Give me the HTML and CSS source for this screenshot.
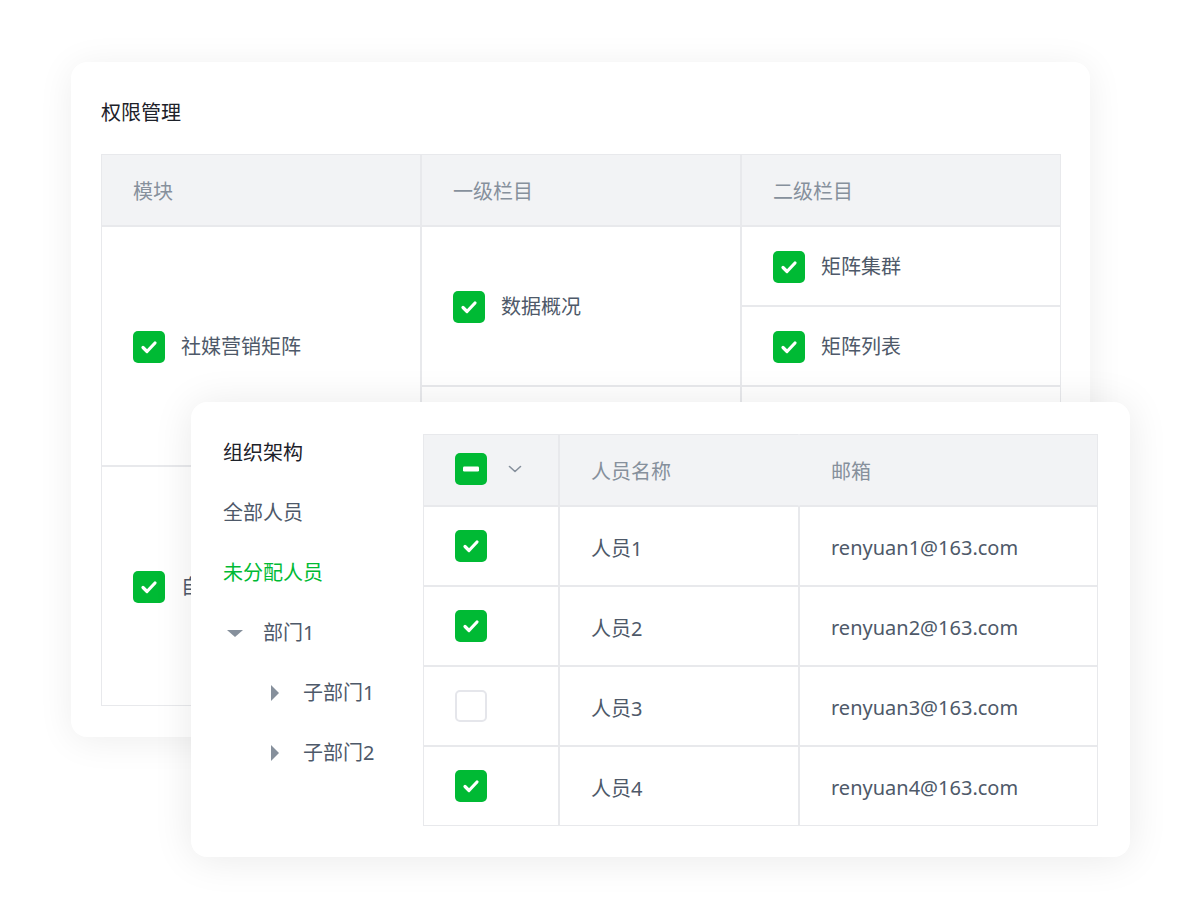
FILE: index.html
```html
<!DOCTYPE html>
<html lang="zh-CN">
<head>
  <meta charset="UTF-8">
  <title>权限管理</title>
  <link rel="stylesheet" href="styles.css">
</head>
<body>
  <div class="stage">
    <div class="card perm">
      <h2 class="title">权限管理</h2>
      <table class="grid">
        <thead>
          <tr><th>模块</th><th>一级栏目</th><th>二级栏目</th></tr>
        </thead>
        <tbody>
          <tr>
            <td rowspan="3"><span class="cb on"></span>社媒营销矩阵</td>
            <td rowspan="2"><span class="cb on"></span>数据概况</td>
            <td><span class="cb on"></span>矩阵集群</td>
          </tr>
          <tr><td><span class="cb on"></span>矩阵列表</td></tr>
          <tr><td><span class="cb on"></span>内容管理</td><td><span class="cb on"></span>内容列表</td></tr>
          <tr>
            <td rowspan="3"><span class="cb on"></span>自媒体运营</td>
            <td rowspan="3"><span class="cb on"></span>账号管理</td>
            <td><span class="cb on"></span>账号列表</td>
          </tr>
          <tr><td><span class="cb on"></span>账号分组</td></tr>
          <tr><td><span class="cb on"></span>账号授权</td></tr>
        </tbody>
      </table>
    </div>

    <div class="card people">
      <ul class="tree">
        <li class="strong">组织架构</li>
        <li>全部人员</li>
        <li class="active">未分配人员</li>
        <li class="dept"><span class="arrow down"></span>部门1</li>
        <li class="sub"><span class="arrow right"></span>子部门1</li>
        <li class="sub"><span class="arrow right"></span>子部门2</li>
      </ul>
      <table class="grid members">
        <thead>
          <tr>
            <th class="sel"><span class="cb part"></span><svg class="chev" width="14" height="8" viewBox="0 0 14 8"><path d="M1.5 1.5 7 6.5 12.5 1.5" fill="none" stroke="#86909c" stroke-width="1.6" stroke-linecap="round" stroke-linejoin="round"/></svg></th>
            <th class="name">人员名称</th>
            <th class="mail">邮箱</th>
          </tr>
        </thead>
        <tbody>
          <tr><td class="sel"><span class="cb on"></span></td><td>人员1</td><td>renyuan1@163.com</td></tr>
          <tr><td class="sel"><span class="cb on"></span></td><td>人员2</td><td>renyuan2@163.com</td></tr>
          <tr><td class="sel"><span class="cb"></span></td><td>人员3</td><td>renyuan3@163.com</td></tr>
          <tr><td class="sel"><span class="cb on"></span></td><td>人员4</td><td>renyuan4@163.com</td></tr>
        </tbody>
      </table>
    </div>
  </div>
</body>
</html>
```

FILE: styles.css
```css
body {
  margin: 0;
  background: #fff;
  font-family: "Noto Sans", "Noto Sans CJK SC", sans-serif;
  color: #4e5969;
  font-size: 20px;
}
.stage {
  position: relative;
  width: 1200px;
  height: 920px;
  overflow: hidden;
}
.card {
  background: #fff;
  border-radius: 16px;
  box-sizing: border-box;
}
.perm {
  margin: 62px 0 0 71px;
  width: 1019px;
  height: 675px;
  padding: 37px 30px 30px;
  box-shadow: 0 4px 36px rgba(0, 0, 0, 0.07);
}
.title {
  margin: 0 0 27px;
  font-size: 20px;
  line-height: 28px;
  font-weight: 400;
  color: #1d2129;
}
.grid {
  border-collapse: separate;
  border-spacing: 0;
  table-layout: fixed;
}
.perm .grid { width: 960px; }
.grid th, .grid td {
  border: 1px solid #e8e9ec;
  padding: 0 0 0 31px;
  text-align: left;
  white-space: nowrap;
  overflow: hidden;
}
.grid th {
  height: 70px;
  background: #f2f3f5;
  font-weight: 400;
  color: #86909c;
}
.grid td {
  height: 76px;
  padding-top: 2px;
}
.cb {
  display: inline-block;
  width: 32px;
  height: 32px;
  box-sizing: border-box;
  border: 2px solid #e5e6eb;
  border-radius: 5px;
  background: #fff center / 32px 32px no-repeat;
  vertical-align: middle;
  margin: -5px 16px 0 0;
}
.cb.on {
  border: 0;
  background-color: #00ba34;
  background-image: url("data:image/svg+xml,%3Csvg xmlns='http://www.w3.org/2000/svg' viewBox='0 0 32 32'%3E%3Cpath d='M10 16.5l4 4 8-8.5' fill='none' stroke='%23fff' stroke-width='3.2' stroke-linecap='round' stroke-linejoin='round'/%3E%3C/svg%3E");
}
.cb.part {
  border: 0;
  background-color: #00ba34;
  background-image: url("data:image/svg+xml,%3Csvg xmlns='http://www.w3.org/2000/svg' viewBox='0 0 32 32'%3E%3Crect x='8' y='13.5' width='16' height='5' rx='1.2' fill='%23fff'/%3E%3C/svg%3E");
}

.people {
  position: absolute;
  left: 191px;
  top: 402px;
  width: 939px;
  height: 455px;
  padding: 32px 32px 0;
  display: flex;
  align-items: flex-start;
  box-shadow: 0 2px 40px rgba(0, 0, 0, 0.09);
}
.tree {
  list-style: none;
  margin: 0;
  padding: 5px 0 0;
  width: 200px;
  flex: none;
}
.tree li {
  line-height: 28px;
  height: 28px;
  margin-bottom: 32px;
  display: flex;
  align-items: center;
}
.tree .strong { color: #1d2129; }
.tree .active { color: #00ba34; }
.tree .dept { padding-left: 4px; }
.tree .sub { padding-left: 48px; }
.arrow {
  width: 0;
  height: 0;
  margin-right: 20px;
}
.arrow.down {
  border-left: 8px solid transparent;
  border-right: 8px solid transparent;
  border-top: 7px solid #86909c;
}
.arrow.right {
  border-top: 8px solid transparent;
  border-bottom: 8px solid transparent;
  border-left: 8px solid #86909c;
  margin-right: 24px;
}
.members { width: 675px; }
.members .sel { width: 103px; }
.members .name { width: 207px; }
.members thead th.name { border-right-color: #f2f3f5; }
.members thead th.mail { border-left-color: #f2f3f5; }
.members .sel .cb { margin: -5px 0 0; }
.members th.sel .cb { margin-top: -3px; }
.chev {
  vertical-align: middle;
  margin: -4px 0 0 21px;
}
.members td { color: #4e5969; }
```
